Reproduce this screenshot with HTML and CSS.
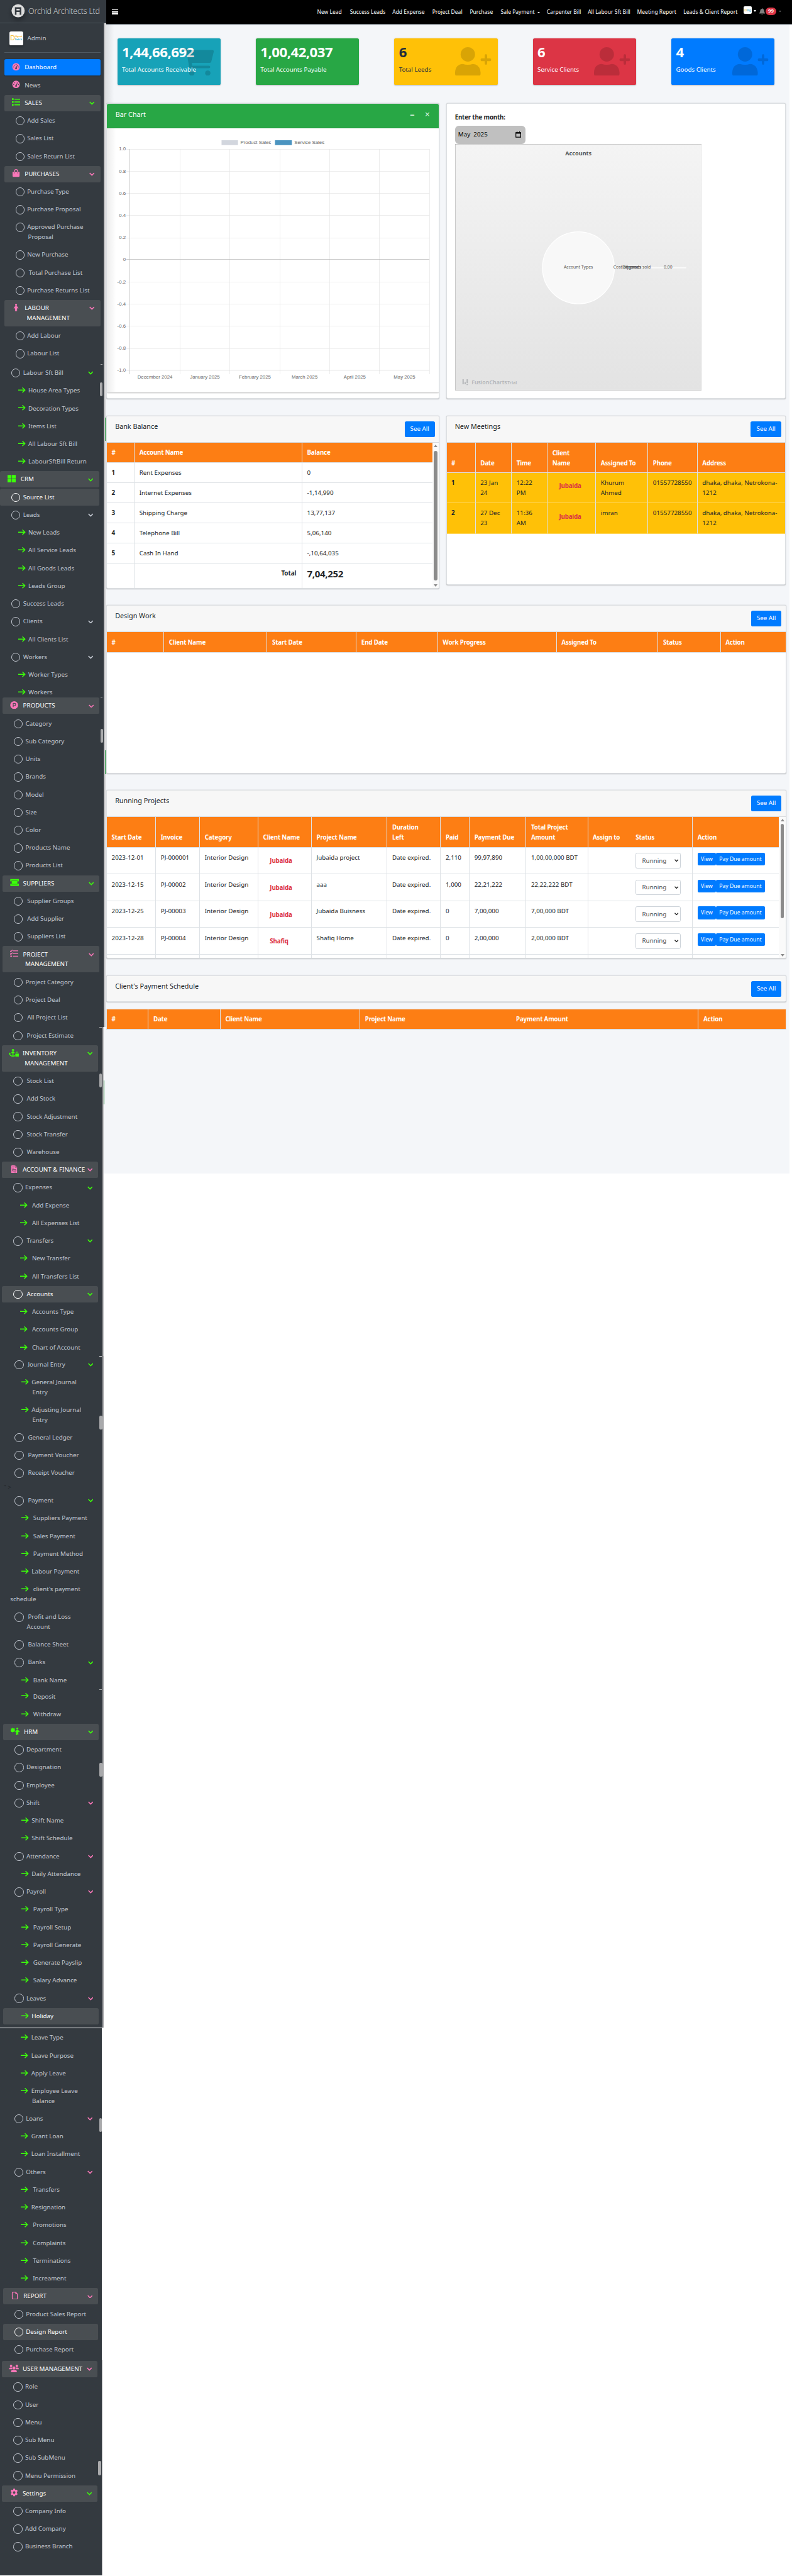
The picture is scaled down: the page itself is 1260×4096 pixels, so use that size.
FILE: index.html
```html
<!DOCTYPE html>
<html lang="en">
<head>
<meta charset="utf-8">
<title>Orchid Architects Ltd</title>
<link rel="stylesheet" href="styles.css">
</head>
<body>
<svg class="defs">
  <symbol id="arrow" viewBox="0 0 18 16"><path d="M0 8H16M10 2l6.500 6-6.500 6" fill="none" stroke="currentColor" stroke-width="2.200"/></symbol>
  <symbol id="chev" viewBox="0 0 13 9"><path d="M1 1.500l5.500 5.500L12 1.500" fill="none" stroke="currentColor" stroke-width="2.400"/></symbol>
  <symbol id="gauge" viewBox="0 0 20 20"><circle cx="10" cy="10" r="9.500" fill="currentColor"/><g fill="#4c4650"><circle cx="4" cy="10.500" r="1.300"/><circle cx="5.700" cy="6" r="1.300"/><circle cx="10" cy="4" r="1.300"/><circle cx="16" cy="10.500" r="1.300"/><circle cx="10" cy="14" r="2.300"/><path d="M9.300 13l3.700-8 1.300.6-3 8z"/></g></symbol>
  <symbol id="list" viewBox="0 0 20 18"><path d="M0 0h4v4H0zM6 1h14v2.500H6zM0 7h4v4H0zM6 7.700h14v2.500H6zM0 14h4v4H0zM6 14.500h14V17H6z" fill="currentColor"/></symbol>
  <symbol id="bag" viewBox="0 0 18 20"><path d="M0 7h18v10a3 3 0 0 1-3 3H3a3 3 0 0 1-3-3z" fill="currentColor"/><path d="M5 9V5a4 4 0 0 1 8 0v4" fill="none" stroke="currentColor" stroke-width="2"/><circle cx="5" cy="9.500" r="1" fill="#484e53"/><circle cx="13" cy="9.500" r="1" fill="#484e53"/></symbol>
  <symbol id="child" viewBox="0 0 12 19"><circle cx="6" cy="2.500" r="2.500" fill="currentColor"/><path d="M3.500 6h5L12 11l-1.500 1-2-2v9H6.600v-5H5.400v5H3.500v-9l-2 2L0 11z" fill="currentColor"/></symbol>
  <symbol id="grid" viewBox="0 0 19 17"><path d="M0 0h9v8H0zM10 0h9v8h-9zM0 9h9v8H0zM10 9h9v8h-9z" fill="currentColor"/></symbol>
  <symbol id="park" viewBox="0 0 20 20"><circle cx="10" cy="10" r="10" fill="currentColor"/><path d="M7.500 15V5.500H11a2.800 2.800 0 0 1 0 5.800H7.500" fill="none" stroke="#484e53" stroke-width="2"/></symbol>
  <symbol id="ticket" viewBox="0 0 24 16"><path d="M2 0h20v5a3 3 0 0 0 0 6v5H2v-5a3 3 0 0 0 0-6z" fill="currentColor"/><path d="M5 4h14v8H5z" fill="none" stroke="#3a6a35" stroke-width="1"/></symbol>
  <symbol id="tasks" viewBox="0 0 20 18"><path d="M7 2.500h13M7 9h13M7 15.500h13M0 2.500l2 2L6 0M0 9l2 2 4-4.500" fill="none" stroke="currentColor" stroke-width="2"/><circle cx="2.500" cy="15.500" r="2" fill="currentColor"/></symbol>
  <symbol id="anchor" viewBox="0 0 25 20"><path d="M10 5v14M6 9h8M1 11q1.500 7 9 7.500 4 0 5-2" fill="none" stroke="currentColor" stroke-width="2.600"/><circle cx="10" cy="3" r="2.200" fill="none" stroke="currentColor" stroke-width="2"/><path d="M0 13l1-4 4 3zM16 12h9v8h-9z" fill="currentColor"/><path d="M18 13v-3a2.500 2.500 0 0 1 5 0v3" fill="none" stroke="currentColor" stroke-width="1.600"/></symbol>
  <symbol id="invoice" viewBox="0 0 15 20"><path d="M0 2a2 2 0 0 1 2-2h8l5 5v13a2 2 0 0 1-2 2H2a2 2 0 0 1-2-2z" fill="currentColor"/><path d="M10 0v5h5M2.500 4h4M2.500 7h4M3 10.500h9v4H3zM8 17.500h4" fill="none" stroke="#484e53" stroke-width="1.100"/></symbol>
  <symbol id="hr" viewBox="0 0 24 20"><path d="M6 0l2 2.500 3-.5-.5 3L12 7l-2 1.500.5 3-3-.5L6 13l-2-2-3 .5.500-3L0 7l1.500-2L1 2l3 .5zM12 10l3.500-4h4l4 4-1.500 2-2-1v9h-2v-4h-1v4h-2.500v-9l-1.500 1z" fill="currentColor"/><circle cx="17.500" cy="2.500" r="2.500" fill="currentColor"/></symbol>
  <symbol id="file" viewBox="0 0 15 20"><path d="M3 1h6.500L14 5.500V17a2 2 0 0 1-2 2H3a2 2 0 0 1-2-2V3a2 2 0 0 1 2-2z" fill="none" stroke="currentColor" stroke-width="2"/><path d="M9 1v5h5z" fill="currentColor"/></symbol>
  <symbol id="users" viewBox="0 0 24 19"><g fill="currentColor"><circle cx="5" cy="3" r="3"/><circle cx="19" cy="3" r="3"/><circle cx="12" cy="8" r="3.700"/><path d="M0 11q0-4 4-4h2q1.500 0 2 1-.8 1.500-.5 3zM24 11q0-4-4-4h-2q-1.500 0-2 1 .8 1.500.5 3zM5 19v-2q0-4.500 4-4.500h6q4 0 4 4.500v2z"/></g></symbol>
  <symbol id="cog" viewBox="0 0 20 20"><path fill-rule="evenodd" d="M8 0h4l.6 2.800 1.800 1L17 3l2 3.500-2 2v3l2 2-2 3.500-2.600-.8-1.800 1L12 20H8l-.6-2.800-1.800-1L3 17l-2-3.500 2-2v-3l-2-2L3 3l2.600.8 1.800-1zM10 6.800a3.200 3.200 0 1 0 0 6.400 3.200 3.200 0 0 0 0-6.400z" fill="currentColor"/></symbol>
  <symbol id="cart" viewBox="0 0 74 66"><path d="M0 2q0-2 2-2h9q2 0 3 4h56q4 0 3.500 4l-6 24q-.7 3-4 3H20l1 7h41q3 0 3 3t-3 3H17q-3 0-3.500-3L7 6H2Q0 6 0 4z" fill="currentColor"/><circle cx="20" cy="60" r="6.500" fill="currentColor"/><circle cx="59" cy="60" r="6.500" fill="currentColor"/></symbol>
  <symbol id="userplus" viewBox="0 0 88 70"><circle cx="31" cy="17.500" r="17.500" fill="currentColor"/><path d="M0 65V61Q1 42 19 41q12 4 24 0 17 1 19 20v4q0 5-5 5H5q-5 0-5-5zM65 27h7v-6q0-4 3-4t3 4v6h6q4 0 4 3.500T84 34h-6v5q0 4-3 4t-3-4v-5h-6q-4 0-4-3.500t3-3.500z" fill="currentColor"/></symbol>
  <symbol id="bell" viewBox="0 0 14 16"><path d="M7 0q1 0 1 1.500 4 .8 4 5Q12 10 14 12v1H0v-1q2-2 2-5.500 0-4.200 4-5Q6 0 7 0zM5 14h4q0 2-2 2t-2-2z" fill="currentColor"/></symbol>
</svg>

<aside class="sidebar">
  <section class="seg s1">
    <header class="brand">
      <svg class="logo" viewBox="0 0 34 34"><circle cx="17" cy="17" r="16.500" fill="#dcdcdc"/><path d="M11 27V10h12v17M11 18h12" fill="none" stroke="#343a40" stroke-width="4"/></svg>
      <span>Orchid Architects Ltd</span>
    </header>
    <div class="user"><div class="avatar"><b>D</b><div><i>iligent</i><em>Soft It</em></div></div><span>Admin</span></div>
    <ul>
      <li class="h on pink"><svg class="ic"><use href="#gauge"/></svg><span>Dashboard</span></li>
      <li class="h plain pink"><svg class="ic"><use href="#gauge"/></svg><span>News</span></li>
      <li class="h green"><svg class="ic"><use href="#list"/></svg><span>SALES</span><svg class="cv"><use href="#chev"/></svg></li>
      <li class="o">Add Sales</li><li class="o">Sales List</li><li class="o">Sales Return List</li>
      <li class="h pink"><svg class="ic"><use href="#bag"/></svg><span>PURCHASES</span><svg class="cv"><use href="#chev"/></svg></li>
      <li class="o">Purchase Type</li><li class="o">Purchase Proposal</li>
      <li class="o two"><span>Approved Purchase<b>Proposal</b></span></li>
      <li class="o">New Purchase</li><li class="o">&nbsp;Total Purchase List</li><li class="o">Purchase Returns List</li>
      <li class="h two pink"><svg class="ic"><use href="#child"/></svg><span>LABOUR<b>MANAGEMENT</b></span><svg class="cv"><use href="#chev"/></svg></li>
      <li class="o">Add Labour</li><li class="o">Labour List</li>
    </ul>
  </section>
  <section class="seg s2">
    <i class="thumb"></i>
    <ul>
      <li class="o green">Labour Sft Bill<svg class="cv"><use href="#chev"/></svg></li>
      <li class="a"><svg><use href="#arrow"/></svg>House Area Types</li>
      <li class="a"><svg><use href="#arrow"/></svg>Decoration Types</li>
      <li class="a"><svg><use href="#arrow"/></svg>Items List</li>
      <li class="a"><svg><use href="#arrow"/></svg>All Labour Sft Bill</li>
      <li class="a"><svg><use href="#arrow"/></svg>LabourSftBill Return</li>
      <li class="h green"><svg class="ic"><use href="#grid"/></svg><span>CRM</span><svg class="cv"><use href="#chev"/></svg></li>
      <li class="o sel">Source List</li>
      <li class="o">Leads<svg class="cv"><use href="#chev"/></svg></li>
      <li class="a"><svg><use href="#arrow"/></svg>New Leads</li>
      <li class="a"><svg><use href="#arrow"/></svg>All Service Leads</li>
      <li class="a"><svg><use href="#arrow"/></svg>All Goods Leads</li>
      <li class="a"><svg><use href="#arrow"/></svg>Leads Group</li>
      <li class="o">Success Leads</li>
      <li class="o">Clients<svg class="cv"><use href="#chev"/></svg></li>
      <li class="a"><svg><use href="#arrow"/></svg>All Clients List</li>
      <li class="o">Workers<svg class="cv"><use href="#chev"/></svg></li>
      <li class="a"><svg><use href="#arrow"/></svg>Worker Types</li>
      <li class="a"><svg><use href="#arrow"/></svg>Workers</li>
    </ul>
  </section>
  <section class="seg s3">
    <i class="thumb"></i>
    <ul>
      <li class="h pink"><svg class="ic"><use href="#park"/></svg><span>PRODUCTS</span><svg class="cv"><use href="#chev"/></svg></li>
      <li class="o">Category</li><li class="o">Sub Category</li><li class="o">Units</li><li class="o">Brands</li><li class="o">Model</li><li class="o">Size</li><li class="o">Color</li><li class="o">Products Name</li><li class="o">Products List</li>
      <li class="h green"><svg class="ic wide"><use href="#ticket"/></svg><span>SUPPLIERS</span><svg class="cv"><use href="#chev"/></svg></li>
      <li class="o">&nbsp;Supplier Groups</li><li class="o">&nbsp;Add Supplier</li><li class="o">&nbsp;Suppliers List</li>
      <li class="h two pink"><svg class="ic"><use href="#tasks"/></svg><span>PROJECT<b>MANAGEMENT</b></span><svg class="cv"><use href="#chev"/></svg></li>
      <li class="o">Project Category</li><li class="o">Project Deal</li><li class="o">&nbsp;All Project List</li>
    </ul>
  </section>
  <section class="seg s4">
    <i class="thumb"></i>
    <ul>
      <li class="o">&nbsp;Project Estimate</li>
      <li class="h two green"><svg class="ic wide"><use href="#anchor"/></svg><span>INVENTORY<b>MANAGEMENT</b></span><svg class="cv"><use href="#chev"/></svg></li>
      <li class="o">&nbsp;Stock List</li><li class="o">&nbsp;Add Stock</li><li class="o">&nbsp;Stock Adjustment</li><li class="o">&nbsp;Stock Transfer</li><li class="o">&nbsp;Warehouse</li>
      <li class="h pink"><svg class="ic"><use href="#invoice"/></svg><span>ACCOUNT &amp; FINANCE</span><svg class="cv"><use href="#chev"/></svg></li>
      <li class="o green">Expenses<svg class="cv"><use href="#chev"/></svg></li>
      <li class="a"><svg><use href="#arrow"/></svg>&nbsp;Add Expense</li>
      <li class="a"><svg><use href="#arrow"/></svg>&nbsp;All Expenses List</li>
      <li class="o green">&nbsp;Transfers<svg class="cv"><use href="#chev"/></svg></li>
      <li class="a"><svg><use href="#arrow"/></svg>&nbsp;New Transfer</li>
      <li class="a"><svg><use href="#arrow"/></svg>&nbsp;All Transfers List</li>
      <li class="o sel green">&nbsp;Accounts<svg class="cv"><use href="#chev"/></svg></li>
      <li class="a"><svg><use href="#arrow"/></svg>&nbsp;Accounts Type</li>
      <li class="a"><svg><use href="#arrow"/></svg>&nbsp;Accounts Group</li>
      <li class="a"><svg><use href="#arrow"/></svg>&nbsp;Chart of Account</li>
    </ul>
  </section>
  <section class="seg s5">
    <i class="thumb"></i>
    <ul>
      <li class="o green">&nbsp;Journal Entry<svg class="cv"><use href="#chev"/></svg></li>
      <li class="a two"><svg><use href="#arrow"/></svg><span>General Journal<b>Entry</b></span></li>
      <li class="a two"><svg><use href="#arrow"/></svg><span>Adjusting Journal<b>Entry</b></span></li>
      <li class="o">&nbsp;General Ledger</li><li class="o">&nbsp;Payment Voucher</li><li class="o">&nbsp;Receipt Voucher</li>
      <li class="stray">" &gt;</li>
      <li class="o green">&nbsp;Payment<svg class="cv"><use href="#chev"/></svg></li>
      <li class="a"><svg><use href="#arrow"/></svg>&nbsp;Suppliers Payment</li>
      <li class="a"><svg><use href="#arrow"/></svg>&nbsp;Sales Payment</li>
      <li class="a"><svg><use href="#arrow"/></svg>&nbsp;Payment Method</li>
      <li class="a"><svg><use href="#arrow"/></svg>Labour Payment</li>
      <li class="a two out"><svg><use href="#arrow"/></svg><span>&nbsp;client's payment<b>schedule</b></span></li>
      <li class="o two back"><span>&nbsp;Profit and Loss<b>Account</b></span></li>
      <li class="o">&nbsp;Balance Sheet</li>
      <li class="o green">&nbsp;Banks<svg class="cv"><use href="#chev"/></svg></li>
      <li class="a"><svg><use href="#arrow"/></svg>&nbsp;Bank Name</li>
    </ul>
  </section>
  <section class="seg s6">
    <i class="thumb"></i>
    <ul>
      <li class="a"><svg><use href="#arrow"/></svg>&nbsp;Deposit</li>
      <li class="a"><svg><use href="#arrow"/></svg>&nbsp;Withdraw</li>
      <li class="h green"><svg class="ic wide"><use href="#hr"/></svg><span>HRM</span><svg class="cv"><use href="#chev"/></svg></li>
      <li class="o">Department</li><li class="o">Designation</li><li class="o">Employee</li>
      <li class="o pink">Shift<svg class="cv"><use href="#chev"/></svg></li>
      <li class="a"><svg><use href="#arrow"/></svg>Shift Name</li>
      <li class="a"><svg><use href="#arrow"/></svg>Shift Schedule</li>
      <li class="o pink">Attendance<svg class="cv"><use href="#chev"/></svg></li>
      <li class="a"><svg><use href="#arrow"/></svg>Daily Attendance</li>
      <li class="o pink">Payroll<svg class="cv"><use href="#chev"/></svg></li>
      <li class="a"><svg><use href="#arrow"/></svg>&nbsp;Payroll Type</li>
      <li class="a"><svg><use href="#arrow"/></svg>&nbsp;Payroll Setup</li>
      <li class="a"><svg><use href="#arrow"/></svg>&nbsp;Payroll Generate</li>
      <li class="a"><svg><use href="#arrow"/></svg>&nbsp;Generate Payslip</li>
      <li class="a"><svg><use href="#arrow"/></svg>&nbsp;Salary Advance</li>
      <li class="o pink">Leaves<svg class="cv"><use href="#chev"/></svg></li>
      <li class="a sel"><svg><use href="#arrow"/></svg>Holiday</li>
    </ul>
  </section>
  <section class="seg s7">
    <i class="thumb"></i>
    <ul>
      <li class="a"><svg><use href="#arrow"/></svg>Leave Type</li>
      <li class="a"><svg><use href="#arrow"/></svg>Leave Purpose</li>
      <li class="a"><svg><use href="#arrow"/></svg>Apply Leave</li>
      <li class="a two"><svg><use href="#arrow"/></svg><span>Employee Leave<b>Balance</b></span></li>
      <li class="o pink">Loans<svg class="cv"><use href="#chev"/></svg></li>
      <li class="a"><svg><use href="#arrow"/></svg>Grant Loan</li>
      <li class="a"><svg><use href="#arrow"/></svg>Loan Installment</li>
      <li class="o pink">Others<svg class="cv"><use href="#chev"/></svg></li>
      <li class="a"><svg><use href="#arrow"/></svg>&nbsp;Transfers</li>
      <li class="a"><svg><use href="#arrow"/></svg>Resignation</li>
      <li class="a"><svg><use href="#arrow"/></svg>&nbsp;Promotions</li>
      <li class="a"><svg><use href="#arrow"/></svg>&nbsp;Complaints</li>
      <li class="a"><svg><use href="#arrow"/></svg>&nbsp;Terminations</li>
      <li class="a"><svg><use href="#arrow"/></svg>&nbsp;Increament</li>
      <li class="h pink"><svg class="ic"><use href="#file"/></svg><span>REPORT</span><svg class="cv"><use href="#chev"/></svg></li>
      <li class="o">Product Sales Report</li><li class="o sel">Design Report</li><li class="o">Purchase Report</li>
    </ul>
  </section>
  <section class="seg s8">
    <i class="thumb"></i>
    <ul>
      <li class="h pink"><svg class="ic wide"><use href="#users"/></svg><span>USER MANAGEMENT</span><svg class="cv"><use href="#chev"/></svg></li>
      <li class="o">Role</li><li class="o">User</li><li class="o">Menu</li><li class="o">Sub Menu</li><li class="o">Sub SubMenu</li><li class="o">Menu Permission</li>
      <li class="h pink gc"><svg class="ic"><use href="#cog"/></svg><span>Settings</span><svg class="cv"><use href="#chev"/></svg></li>
      <li class="o">Company Info</li><li class="o">Add Company</li><li class="o">Business Branch</li>
    </ul>
  </section>
</aside>

<div class="page">
  <nav class="topbar">
    <div class="burger"><i></i><i></i><i></i></div>
    <div class="links">
      <a>New Lead</a><a>Success Leads</a><a>Add Expense</a><a>Project Deal</a><a>Purchase</a><a>Sale Payment<i class="caret"></i></a><a>Carpenter Bill</a><a>All Labour Sft Bill</a><a>Meeting Report</a><a>Leads &amp; Client Report</a>
    </div>
    <div class="tools"><div class="mini"><b>D</b><i>ilig</i></div><i class="caret big"></i><svg class="bell"><use href="#bell"/></svg><span class="badge">99</span><i class="caret dim"></i></div>
  </nav>

  <main>
    <div class="stats">
      <div class="stat teal"><div><strong>1,44,66,692</strong><p>Total Accounts Receivable</p></div><svg class="cart"><use href="#cart"/></svg></div>
      <div class="stat grn"><div><strong>1,00,42,037</strong><p>Total Accounts Payable</p></div></div>
      <div class="stat yel"><div><strong>6</strong><p>Total Leeds</p></div><svg class="up"><use href="#userplus"/></svg></div>
      <div class="stat red"><div><strong>6</strong><p>Service Clients</p></div><svg class="up"><use href="#userplus"/></svg></div>
      <div class="stat blu"><div><strong>4</strong><p>Goods Clients</p></div><svg class="up"><use href="#userplus"/></svg></div>
    </div>

    <div class="pair charts">
      <div class="card left">
        <div class="inner">
          <div class="ghead"><h3>Bar Chart</h3><span class="min">–</span><span class="cls">×</span></div>
          <svg class="bar" viewBox="260 312 808 640">
            <g shape-rendering="crispEdges" fill="none">
              <path d="M308 363.500H1044M308 416.500H1044M308 470.500H1044M308 524.500H1044M308 578.500H1044M308 685.500H1044M308 739.500H1044M308 793.500H1044M308 847.500H1044M437.500 363V910M559.500 363V910M680.500 363V910M802 363V910M923.500 363V910M1044.500 363V910" stroke="#e3e3e3"/>
              <path d="M308 631.500H1044M316.500 363V910" stroke="#b3b3b3"/><path d="M308 900.500H1044" stroke="#cccccc"/>
            </g>
            <path d="M539 341h40v12h-40z" fill="#d2d6de"/><path d="M669 341h41v12h-41z" fill="#4b94c0"/>
            <text x="585" y="351">Product Sales</text><text x="716" y="351">Service Sales</text>
            <g text-anchor="end"><text x="306" y="366">1.0</text><text x="306" y="420">0.8</text><text x="306" y="474">0.6</text><text x="306" y="528">0.4</text><text x="306" y="581">0.2</text><text x="306" y="635">0</text><text x="306" y="689">-0.2</text><text x="306" y="743">-0.4</text><text x="306" y="797">-0.6</text><text x="306" y="850">-0.8</text><text x="306" y="904">-1.0</text></g>
            <g text-anchor="middle"><text x="377" y="921">December 2024</text><text x="498.500" y="921">January 2025</text><text x="620" y="921">February 2025</text><text x="741" y="921">March 2025</text><text x="863" y="921">April 2025</text><text x="984" y="921">May 2025</text></g>
          </svg>
        </div>
      </div>
      <div class="card right month">
        <label>Enter the month:</label>
        <div class="minput"><span>May&nbsp; 2025</span><svg viewBox="0 0 13 14"><path d="M1 2.500h11v10.500H1z" fill="none" stroke="#000" stroke-width="1.600"/><path d="M1 2h11v3H1zM3 0h1.500v2H3zM8.500 0H10v2H8.500z"/></svg></div>
        <svg class="fusion" viewBox="0 0 600 599">
          <defs><linearGradient id="fg" x1="0" y1="0" x2="0" y2="1"><stop offset="0" stop-color="#f4f4f4"/><stop offset="1" stop-color="#e3e3e3"/></linearGradient></defs>
          <rect x=".5" y=".5" width="599" height="598" fill="url(#fg)" stroke="#b4b4b4"/>
          <text x="300" y="28" text-anchor="middle" class="ft">Accounts</text>
          <path d="M388 301H562" stroke="#fff" stroke-width="2"/>
          <circle cx="300" cy="301" r="87.500" fill="#f8f8f8" stroke="#fff" stroke-width="2"/>
          <g text-anchor="middle" class="fl"><text x="300" y="302">Account Types</text><text x="430.500" y="302">Cost of goods sold</text><text x="430" y="302">Expenses</text><text x="430" y="302">Income</text><text x="518" y="302">0.00</text></g>
          <path d="M18 572h3v12h-3zM23 579h3v5h-3zM28 572h3v9h-3zM28 583h3v3h-3z" fill="#b3b5b8"/>
          <text x="40" y="584" class="fw">FusionCharts</text><text x="127" y="584" class="fs">Trial</text>
        </svg>
      </div>
    </div>

    <div class="pair lists">
      <div class="card left bank">
        <div class="chead"><h3>Bank Balance</h3><a class="btn">See All</a></div>
        <div class="scroll">
          <table><colgroup><col class="w66"><col class="w408"><col></colgroup>
            <thead><tr><th>#</th><th>Account Name</th><th>Balance</th></tr></thead>
            <tbody>
              <tr><th>1</th><td>Rent Expenses</td><td>0</td></tr>
              <tr><th>2</th><td>Internet Expenses</td><td>-1,14,990</td></tr>
              <tr><th>3</th><td>Shipping Charge</td><td>13,77,137</td></tr>
              <tr><th>4</th><td>Telephone Bill</td><td>5,06,140</td></tr>
              <tr><th>5</th><td>Cash In Hand</td><td>-,10,64,035</td></tr>
              <tr class="total"><td></td><td>Total</td><td>7,04,252</td></tr>
            </tbody></table>
          <div class="sbar"><i class="u"></i><b></b><i class="d"></i></div>
        </div>
      </div>
      <div class="card right meet">
        <div class="chead"><h3>New Meetings</h3><a class="btn">See All</a></div>
        <table><colgroup><col class="w69"><col class="w88"><col class="w87"><col class="w118"><col class="w127"><col class="w120"><col></colgroup>
          <thead><tr><th>#</th><th>Date</th><th>Time</th><th>Client<br>Name</th><th>Assigned To</th><th>Phone</th><th>Address</th></tr></thead>
          <tbody>
            <tr><th>1</th><td>23 Jan<br>24</td><td>12:22<br>PM</td><td class="nm">Jubaida</td><td>Khurum<br>Ahmed</td><td>01557728550</td><td>dhaka, dhaka, Netrokona-<br>1212</td></tr>
            <tr><th>2</th><td>27 Dec<br>23</td><td>11:36<br>AM</td><td class="nm">Jubaida</td><td>imran</td><td>01557728550</td><td>dhaka, dhaka, Netrokona-<br>1212</td></tr>
          </tbody></table>
      </div>
    </div>

    <div class="card full design">
      <div class="chead"><h3>Design Work</h3><a class="btn">See All</a></div>
      <table><colgroup><col class="w138"><col class="w251"><col class="w217"><col class="w198"><col class="w289"><col class="w247"><col class="w152"><col></colgroup>
        <thead><tr><th>#</th><th>Client Name</th><th>Start Date</th><th>End Date</th><th>Work Progress</th><th>Assigned To</th><th>Status</th><th>Action</th></tr></thead></table>
    </div>

    <div class="card full running">
      <div class="chead"><h3>Running Projects</h3><a class="btn">See All</a></div>
      <div class="scroll">
        <table><colgroup><col class="w118"><col class="w107"><col class="w142"><col class="w130"><col class="w184"><col class="w130"><col class="w70"><col class="w138"><col class="w150"><col class="w106"><col class="w149"><col></colgroup>
          <thead><tr><th>Start Date</th><th>Invoice</th><th>Category</th><th>Client Name</th><th>Project Name</th><th>Duration<br>Left</th><th>Paid</th><th>Payment Due</th><th>Total Project<br>Amount</th><th>Assign to</th><th class="nb">Status</th><th>Action</th></tr></thead>
          <tbody>
            <tr><td>2023-12-01</td><td>PJ-000001</td><td>Interior Design</td><td class="nm">Jubaida</td><td>Jubaida project</td><td>Date expired.</td><td>2,110</td><td>99,97,890</td><td>1,00,00,000 BDT</td><td></td><td class="nb"><span class="select">Running<svg><use href="#chev"/></svg></span></td><td><a class="sm">View</a><a class="sm">Pay Due amount</a></td></tr>
            <tr><td>2023-12-15</td><td>PJ-00002</td><td>Interior Design</td><td class="nm">Jubaida</td><td>aaa</td><td>Date expired.</td><td>1,000</td><td>22,21,222</td><td>22,22,222 BDT</td><td></td><td class="nb"><span class="select">Running<svg><use href="#chev"/></svg></span></td><td><a class="sm">View</a><a class="sm">Pay Due amount</a></td></tr>
            <tr><td>2023-12-25</td><td>PJ-00003</td><td>Interior Design</td><td class="nm">Jubaida</td><td>Jubaida Buisness</td><td>Date expired.</td><td>0</td><td>7,00,000</td><td>7,00,000 BDT</td><td></td><td class="nb"><span class="select">Running<svg><use href="#chev"/></svg></span></td><td><a class="sm">View</a><a class="sm">Pay Due amount</a></td></tr>
            <tr><td>2023-12-28</td><td>PJ-00004</td><td>Interior Design</td><td class="nm">Shafiq</td><td>Shafiq Home</td><td>Date expired.</td><td>0</td><td>2,00,000</td><td>2,00,000 BDT</td><td></td><td class="nb"><span class="select">Running<svg><use href="#chev"/></svg></span></td><td><a class="sm">View</a><a class="sm">Pay Due amount</a></td></tr>
            <tr class="rest"><td></td><td></td><td></td><td></td><td></td><td></td><td></td><td></td><td></td><td></td><td class="nb"></td><td></td></tr>
          </tbody></table>
        <div class="sbar"><i class="u"></i><b></b><i class="d"></i></div>
      </div>
    </div>

    <div class="card full pay"><div class="chead"><h3>Client's Payment Schedule</h3><a class="btn">See All</a></div></div>
    <table class="ptab"><colgroup><col class="w100"><col class="w175"><col class="w340"><col class="w369"><col class="w454"><col></colgroup>
      <thead><tr><th>#</th><th>Date</th><th>Client Name</th><th>Project Name</th><th class="nb">Payment Amount</th><th>Action</th></tr></thead></table>
  </main>
</div>
</body>
</html>
```
FILE: styles.css
```css
* { box-sizing: border-box; }
html { overflow: hidden; background: #fff; }
body { margin: 0; zoom: .654; width: 1926px; height: 6261px; overflow: hidden; display: flex; align-items: flex-start; font: 15px/24px "Noto Sans", "Open Sans", sans-serif; color: #212529; }
ul { list-style: none; margin: 0; padding: 0; }
h3, p { margin: 0; font-weight: 400; }
.defs { position: absolute; width: 0; height: 0; }

/* sidebar */
.sidebar { width: 258px; flex: none; color: #c2c7d0; }
.seg { position: relative; overflow: hidden; background: linear-gradient(90deg, #343a40 var(--w), #a9a9ab var(--w), #a9a9ab calc(var(--w) + 2px), #dcdcde calc(var(--w) + 3px), #dcdcde calc(var(--w) + var(--g, 6px)), transparent calc(var(--w) + var(--g, 6px))); }
.s1 { --w: 252px; height: 884.6px; }
.s1 ul { padding: 16px 14px 0 10px; }
.s2 { --w: 252px; height: 809.4px; }
.s2 ul { padding: 2px 17px 0 0; }
.s3 { --w: 252px; height: 803px; }
.s3 ul { padding: 2px 16px 0 6px; }
.s4 { --w: 249px; --g: 4px; height: 800px; }
.s4 ul { padding: 1px 19px 0 5px; }
.s5 { --w: 250px; --g: 3px; height: 810px; }
.s5 ul { padding: .5px 18px 0 8px; }
.s6 { --w: 250px; --g: 2px; height: 823px; }
.s6 ul { margin-top: -2.500px; padding: 0 18px 0 8px; }
.s7 { --w: 248px; height: 807px; background: linear-gradient(90deg, #343a40 248px, #fff 248px); border-top: 1.500px solid #fff; }
.s7 ul { padding: 3px 19px 0 7px; }
.s8 { --w: 247px; height: 524px; background: linear-gradient(90deg, #343a40 247px, #a9a9ab 247px, #a9a9ab 249px, #fff 249px); }
.s8 ul { padding: 3px 21px 0 5px; }
.thumb { position: absolute; width: 6.500px; height: 34px; border-radius: 3px; background: #a9aaac; }
.s2 .thumb { left: 243px; top: 45px; }
.s3 .thumb { left: 244px; top: 78px; }
.s4 .thumb { left: 241px; top: 113px; }
.s5 .thumb { left: 242px; top: 145px; }
.s6 .thumb { left: 242px; top: 179px; }
.s7 .thumb { left: 241px; top: 218px; }
.s8 .thumb { left: 239px; top: 247px; }
.s2::before, .s3::before, .s4::before, .s5::before, .s6::before { content: ""; position: absolute; left: calc(var(--w) - 8px); top: 0; width: 6px; height: 2px; background: #a9aaac; }
.s2::after, .s3::after, .s4::after { content: ""; position: absolute; left: calc(var(--w) + 3px); top: 130px; width: 2px; height: 58px; background: #28963f; }

li { display: flex; height: 40px; margin-bottom: 3.200px; padding: 8px 0; border-radius: 4px; white-space: nowrap; }
li.two { height: 64px; }
li b { display: block; font-weight: 400; margin-left: 2px; }
li svg { display: block; flex: none; margin-top: 3px; color: #3cff0a; }
.h { background: #494e52; color: #fff; }
.h b { margin-left: 5px; }
.h span { width: 150px; }
.h .ic { width: 20px; height: 19px; margin: 1px 11px 0 19px; }
.h .ic.wide { width: 25px; margin: 1px 8.500px 0 16.500px; }
.h.plain { background: none; color: #c2c7d0; }
.h.on { background: #007bff; box-shadow: 0 1px 3px rgba(0,0,0,.3); }
.o::before { content: ""; flex: none; width: 19px; height: 19px; margin: 1.500px 6.500px 0 27.500px; border: 2px solid currentColor; border-radius: 50%; }
.a svg { width: 18px; height: 16px; margin: 3px 7px 0 44px; }
.sel { background: #494e52; color: #fff; }
li .cv { width: 13px; height: 9px; margin: 8px 13.500px 0 auto; color: #c2c7d0; }
.pink svg, .pink .cv { color: #fb77b9; }
.green svg, .green .cv, .gc .cv { color: #3cff0a; }
.out b { margin-left: -52px; }
.back b { margin-left: 1px; }
.stray { height: 24px; margin: 0; padding: 0 0 0 1px; color: #212529; line-height: 24px; }

.brand { display: flex; align-items: center; height: 57px; padding: 0 0 4px 28px; border-bottom: 1px solid #4b545c; background: #343a40; font-size: 19px; font-weight: 300; font-family: "Open Sans", sans-serif; color: #d9dadb; white-space: nowrap; }
.logo { width: 33px; height: 34px; margin-right: 8px; border-radius: 50%; box-shadow: 0 6px 10px rgba(0,0,0,.3); }
.brand span { padding-top: 4px; letter-spacing: -.25px; }
.user { display: flex; align-items: center; height: 71px; margin: 0 14px 0 10px; padding: 3px 0 0 13px; border-bottom: 1px solid #4f5962; }
.user > span { margin-left: 10.500px; }
.avatar { display: flex; align-items: center; justify-content: center; width: 33px; height: 34px; border-radius: 4px; background: #fff; color: #f5b91e; box-shadow: 0 3px 6px rgba(0,0,0,.3); }
.avatar b { font: 16px/16px "Liberation Sans", sans-serif; }
.avatar i, .avatar em { display: block; font: bold 6px/7px "Liberation Sans", sans-serif; }
.avatar em { color: #12a5d0; }

/* top bar */
.page { flex: 1; min-width: 0; }
.topbar { display: flex; align-items: center; height: 59px; margin-left: -1px; padding-left: 15px; background: #000; border-bottom: 1px solid #4b545c; color: #fff; position: relative; }
.burger { width: 15px; height: 13px; display: flex; flex-direction: column; justify-content: space-between; margin-right: 484.500px; }
.burger i { height: 2.500px; background: #fff; }
.links { display: flex; font-size: 13px; white-space: nowrap; }
.links a { flex: none; width: 100px; }
.links a:nth-child(1) { width: 80px; }
.links a:nth-child(2) { width: 103px; }
.links a:nth-child(3) { width: 97px; }
.links a:nth-child(4) { width: 91.500px; }
.links a:nth-child(5) { width: 75px; }
.links a:nth-child(6) { width: 112px; }
.links a:nth-child(8) { width: 120px; }
.links a:nth-child(9) { width: 112.500px; }
.links a:nth-child(10) { width: 146.500px; }
.caret { display: inline-block; border: 3.500px solid transparent; border-top: 4px solid #fff; border-bottom: 0; margin-left: 7px; vertical-align: 2px; }
.tools { display: flex; align-items: center; margin-top: -3px; }
.mini { width: 20px; height: 19px; margin-top: -5px; border-radius: 3px; background: #fff; color: #f5b91e; display: flex; align-items: center; justify-content: center; }
.mini b, .mini i { font: 8px/8px "Liberation Sans", sans-serif; }
.mini i { color: #12a5d0; }
.caret.big { border-width: 5px 4px 0; margin-left: 4px; }
.bell { width: 14px; height: 16px; margin-left: 8px; color: #7f7f7f; }
.badge { width: 27px; height: 18px; margin-left: 1px; border-radius: 9px; background: #dc3545; font: bold 12px/18px "Noto Sans", sans-serif; text-align: center; }
.caret.dim { border-top-color: #7f7f7f; margin-left: 5px; }

/* dashboard */
main { height: 2794px; margin: 0 6px 0 -5px; padding: 35px 0 0 5.500px; background: linear-gradient(90deg, #dddfe2 5px, #f4f6f9 25px) 0 0 / 100% 880px no-repeat #f4f6f9; }
.sidebar { position: relative; z-index: 1; }
.stats { display: flex; gap: 86px; padding-left: 27px; height: 157px; }
.stat { display: flex; flex: none; justify-content: space-between; width: 251px; height: 113px; padding: 10px 15px 0 11px; border-radius: 4px; color: #fff; box-shadow: 0 1px 3px rgba(0,0,0,.25); position: relative; }
.stat strong { display: block; font-size: 34px; line-height: 46px; letter-spacing: -.8px; white-space: nowrap; }
.stat p { margin-top: 8px; line-height: 24px; white-space: nowrap; }
.stat svg { color: rgba(0,0,0,.15); }
.up { width: 88px; height: 70px; margin-top: 10px; }
.cart { position: absolute; right: 16px; top: 24px; width: 74px; height: 66px; }
.teal { background: #17a2b8; }
.grn { background: #28a745; }
.yel { background: #ffc107; color: #1f2d3d; }
.red { background: #dc3545; }
.blu { background: #007bff; }

.pair { display: flex; gap: 15.500px; }
.charts { height: 760px; }
.lists { height: 460px; }
.card { background: #fff; border: 1px solid #dcdfe2; border-radius: 4px; box-shadow: 0 0 1px rgba(0,0,0,.13), 0 1px 3px rgba(0,0,0,.2); overflow: hidden; }
.left { width: 811px; flex: none; }
.right { width: 827px; flex: none; }
.charts .left { height: 718px; }
.inner { height: 701px; border-radius: 4px; box-shadow: 0 1px 3px rgba(0,0,0,.3); overflow: hidden; }
.ghead { display: flex; height: 60px; padding: 13px 22px 0 21px; background: #28a745; border-bottom: 1px solid #23923d; color: #fff; }
.ghead h3 { flex: 1; font-size: 16.500px; }
.ghead span { font-size: 22px; color: #cdeed5; }
.ghead .min { margin-right: 25px; font-weight: 700; }
.bar { display: block; width: 808px; height: 640px; background: linear-gradient(90deg, #ececec, #fff 22px); }
.bar text { font: 12px "Liberation Sans", sans-serif; fill: #666; }
.month { height: 719px; padding: 21px 0 0 20px; }
.month label { display: block; height: 32px; font-weight: 700; letter-spacing: -.3px; }
.minput { display: flex; align-items: center; justify-content: space-between; width: 172px; height: 44.500px; padding: 0 10px 0 8px; border-radius: 9px; background: #c0c0c0; color: #000; }
.minput svg { width: 14px; height: 15px; }
.fusion { display: block; width: 600px; height: 599px; }
.ft { font: bold 14px "Noto Sans", sans-serif; fill: #545454; }
.fl { font: 10.500px "Noto Sans", sans-serif; fill: #545454; }
.fw { font: 600 13.500px "Noto Sans", sans-serif; fill: #b3b5b8; }
.fs { font: 600 11px "Noto Sans", sans-serif; fill: #b3b5b8; }

.chead { display: flex; justify-content: space-between; height: 64px; padding: 12px 10px 0 20px; background: #f7f7f7; border-bottom: 1px solid #d8dadd; }
.chead h3 { font-size: 16.500px; }
.btn { width: 74px; height: 38px; border-radius: 4px; background: #007bff; color: #fff; text-align: center; line-height: 38px; }
.bank { height: 420px; }
.meet { height: 411px; }
table { border-collapse: separate; border-spacing: 0; table-layout: fixed; width: 100%; }
th, td { padding: 12px 0 0 11.500px; text-align: left; vertical-align: top; border: 0 solid #dee2e6; border-width: 0 0 1px 1px; white-space: nowrap; }
th { font-weight: 700; letter-spacing: -.3px; }
tr > :first-child { border-left: 0; }
.nb { border-left: 0; }
thead th { background: #fd7e14; color: #fff; height: 49px; padding-bottom: 11px; vertical-align: bottom; border-bottom-width: 2px; }
.scroll { display: flex; }
.scroll table { flex: 1; }
.sbar { display: flex; flex: none; flex-direction: column; align-items: center; justify-content: space-between; width: 16px; background: #fafafa; }
.sbar b { width: 8.500px; border-radius: 5px; background: #8b8b8b; }
.sbar i { border: 5px solid transparent; }
.sbar .u { border-bottom: 7px solid #8b8b8b; border-top: 0; margin-top: 5px; }
.sbar .d { border-top: 7px solid #8b8b8b; border-bottom: 0; margin-bottom: 5px; }
.bank .scroll { height: 355px; }
.bank .sbar b { height: 316px; }
.bank thead th { height: 48px; }
.bank tbody tr > * { height: 49px; }
.bank tbody tr.total > * { height: 61px; font-weight: 700; }
.bank tbody tr.total td:nth-child(2) { text-align: right; padding-right: 13px; }
.total td:last-child { font-size: 23px; line-height: 30px; letter-spacing: -.5px; padding-top: 11px; }
.meet thead th { height: 74px; }
.meet tbody tr > * { height: 73.500px; background: #ffc107; border-bottom-color: #ffd75e; }
td.nm { padding: 20px 0 0 28px; color: #dc3545; font-weight: 700; letter-spacing: -.3px; }
.full { width: 1654px; }
.design { height: 410px; margin-bottom: 40px; }
.design thead th { height: 51px; }
.running { height: 410px; margin-bottom: 41px; }
.running .scroll { height: 345px; overflow: hidden; }
.running thead th { height: 74px; }
.running tbody td { height: 65.200px; padding-top: 13px; }
.running tbody td.nm { padding-top: 21px; }
.running tbody tr.rest td { height: 12px; padding: 0; }
.running .sbar b { height: 230px; margin-bottom: 82px; }
.select { display: flex; align-items: center; justify-content: space-between; width: 110px; height: 38px; padding: 0 4px 0 14px; border: 1px solid #ced4da; border-radius: 4px; color: #495057; }
.select svg { width: 10px; height: 7px; color: #222; }
.sm { display: inline-block; height: 31px; padding: 0 8px; border-radius: 3px; background: #007bff; color: #fff; font-size: 13.200px; line-height: 31px; }
.pay { height: 64px; margin-bottom: 16px; }
.ptab { width: 1654px; border: 1px solid #dee2e6; }
.w66 { width: 66px; } .w408 { width: 408px; }
.w69 { width: 69px; } .w88 { width: 88px; } .w87 { width: 87px; } .w118 { width: 118px; } .w127 { width: 127px; } .w120 { width: 120px; }
.w138 { width: 138px; } .w251 { width: 251px; } .w217 { width: 217px; } .w198 { width: 198px; } .w289 { width: 289px; } .w247 { width: 247px; } .w152 { width: 152px; }
.w107 { width: 107px; } .w142 { width: 142px; } .w130 { width: 130px; } .w184 { width: 184px; } .w70 { width: 70px; } .w150 { width: 150px; } .w106 { width: 106px; } .w149 { width: 149px; }
.w100 { width: 100px; } .w175 { width: 175px; } .w340 { width: 340px; } .w369 { width: 369px; } .w454 { width: 454px; }
```
